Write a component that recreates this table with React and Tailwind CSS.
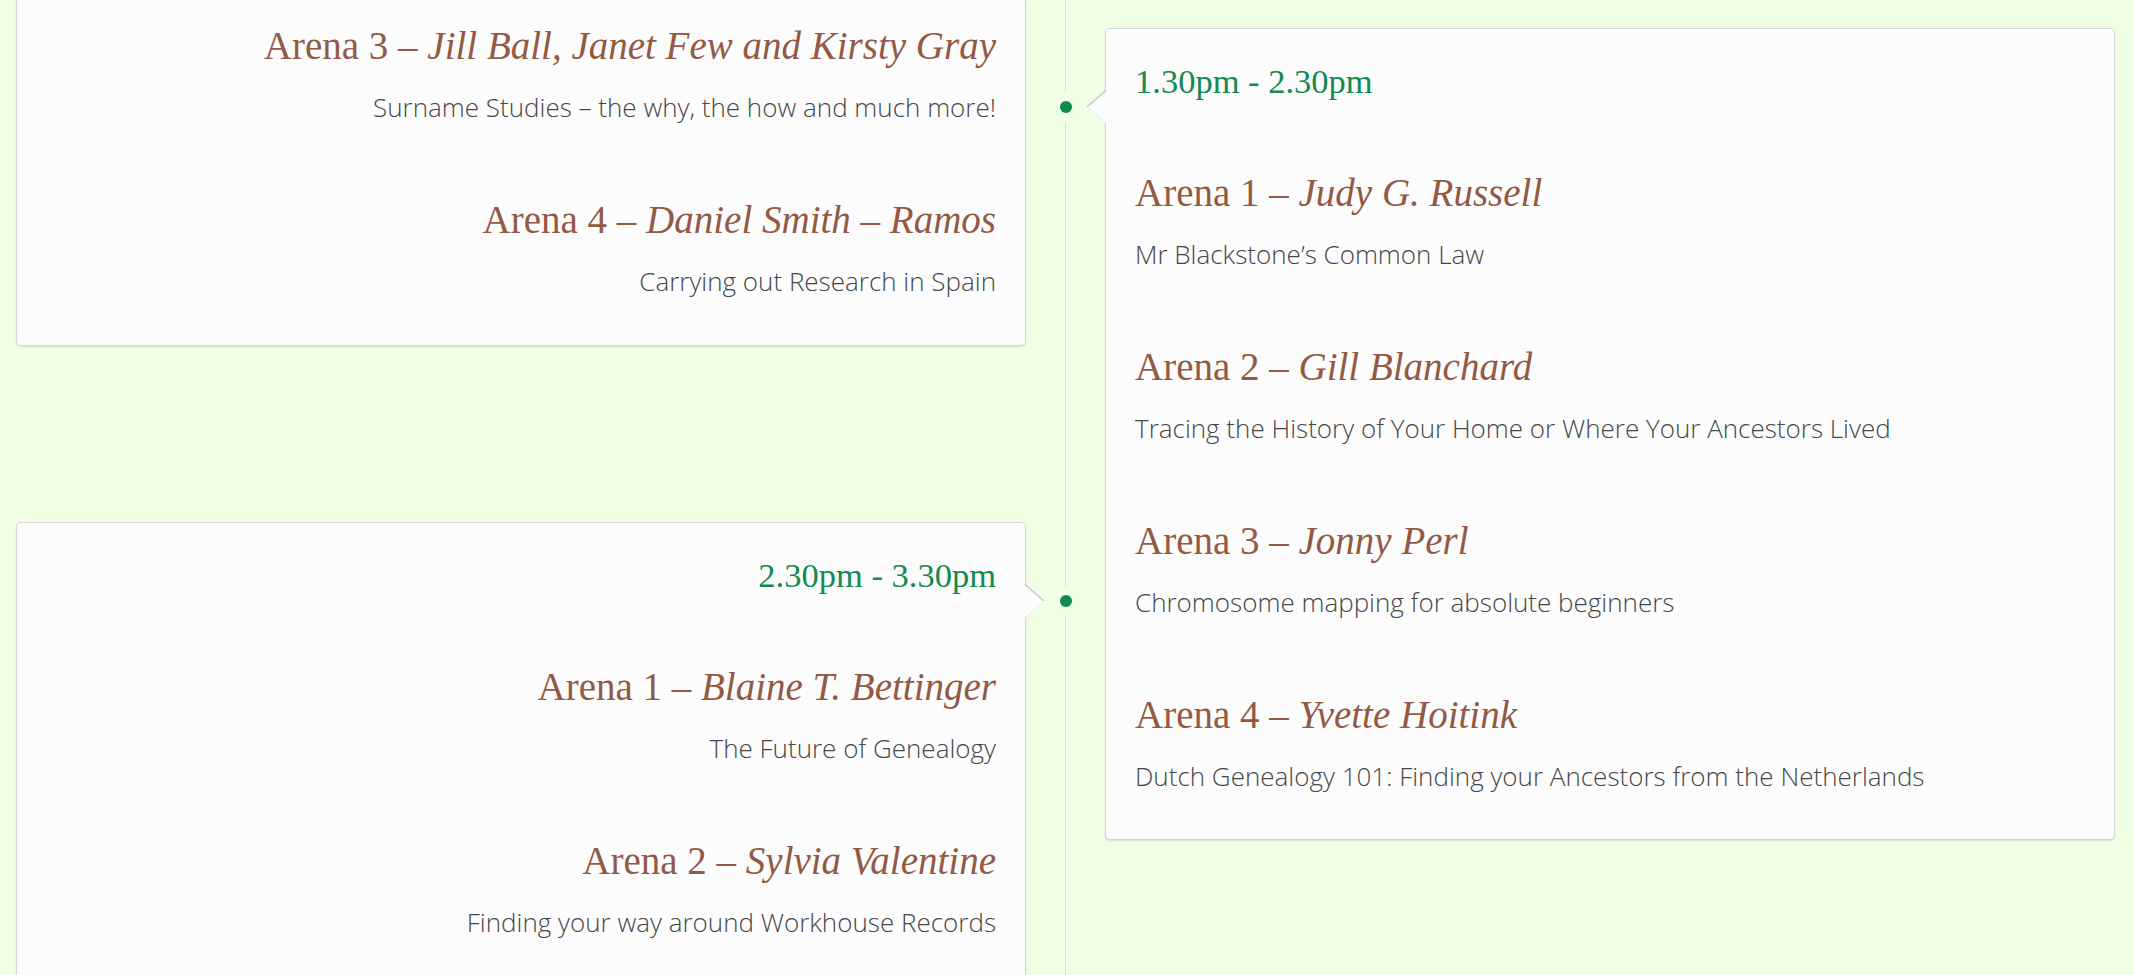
import React from 'react';

const serif = 'font-["Liberation_Serif","Times_New_Roman",serif]';

const slots = {
  leftTop: {
    sessions: [
      { arena: 'Arena 3', speaker: 'Jill Ball, Janet Few and Kirsty Gray', talk: 'Surname Studies – the why, the how and much more!' },
      { arena: 'Arena 4', speaker: 'Daniel Smith – Ramos', talk: 'Carrying out Research in Spain' },
    ],
  },
  right: {
    time: '1.30pm - 2.30pm',
    sessions: [
      { arena: 'Arena 1', speaker: 'Judy G. Russell', talk: 'Mr Blackstone’s Common Law' },
      { arena: 'Arena 2', speaker: 'Gill Blanchard', talk: 'Tracing the History of Your Home or Where Your Ancestors Lived' },
      { arena: 'Arena 3', speaker: 'Jonny Perl', talk: 'Chromosome mapping for absolute beginners' },
      { arena: 'Arena 4', speaker: 'Yvette Hoitink', talk: 'Dutch Genealogy 101: Finding your Ancestors from the Netherlands' },
    ],
  },
  leftBottom: {
    time: '2.30pm - 3.30pm',
    sessions: [
      { arena: 'Arena 1', speaker: 'Blaine T. Bettinger', talk: 'The Future of Genealogy' },
      { arena: 'Arena 2', speaker: 'Sylvia Valentine', talk: 'Finding your way around Workhouse Records' },
    ],
  },
};

// dot on the timeline + little arrow pointing from the card to it
const Marker = ({ side }) => {
  if (side === 'right') {
    return (
      <>
        <div className="absolute -left-[55px] top-[63px] w-[30px] h-[30px] rounded-full bg-[#effee4] flex items-center justify-center">
          <div className="w-[12px] h-[12px] rounded-full bg-[#0f8a4c]" />
        </div>
        <svg className="absolute -left-[20px] top-[61px]" width="21" height="34" viewBox="0 0 21 34">
          <polygon points="21,0 1,17 21,34" fill="#fcfcfc" />
          <line x1="1" y1="17" x2="20" y2="0.5" stroke="#c9c9c9" strokeWidth="1.6" />
          <line x1="1" y1="17" x2="20" y2="33.5" stroke="#ececec" strokeWidth="1" />
        </svg>
      </>
    );
  }
  return (
    <>
      <div className="absolute -right-[56px] top-[63px] w-[30px] h-[30px] rounded-full bg-[#effee4] flex items-center justify-center">
        <div className="w-[12px] h-[12px] rounded-full bg-[#0f8a4c]" />
      </div>
      <svg className="absolute -right-[20px] top-[61px]" width="21" height="34" viewBox="0 0 21 34">
        <polygon points="0,0 20,17 0,34" fill="#fcfcfc" />
        <line x1="20" y1="17" x2="1" y2="0.5" stroke="#c9c9c9" strokeWidth="1.6" />
        <line x1="20" y1="17" x2="1" y2="33.5" stroke="#ececec" strokeWidth="1" />
      </svg>
    </>
  );
};

const Session = ({ session, first }) => (
  <div className={first ? '' : 'mt-[71px]'}>
    <h3 className={`${serif} text-[39px] leading-[48px] text-[#925a44] font-normal whitespace-nowrap`}>
      {session.arena} – <em>{session.speaker}</em>
    </h3>
    <p className='mt-[19px] font-["Open_Sans",sans-serif] font-light text-[26px] leading-[36px] text-[#474747] whitespace-nowrap'>
      {session.talk}
    </p>
  </div>
);

const Card = ({ slot, side, className = '', marker = true }) => {
  const align = side === 'left' ? 'text-right' : 'text-left';
  return (
    <div
      className={`relative bg-[#fcfcfc] border border-[#d6d6d6] rounded-[5px] shadow-[0_1px_2px_rgba(0,0,0,0.12)] px-[29px] ${align} ${className}`}
    >
      {marker && <Marker side={side} />}
      {slot.time && (
        <div className={`${serif} text-[34.5px] leading-[40px] text-[#138a4e] mb-[68px]`}>{slot.time}</div>
      )}
      {slot.sessions.map((s, i) => (
        <Session key={s.arena + s.speaker} session={s} first={i === 0} />
      ))}
    </div>
  );
};

export default function App() {
  return (
    <div className="flex h-[975px] overflow-hidden bg-[#effee4] pl-[16px]">
      {/* Left column */}
      <div className="w-[1010px] shrink-0 flex flex-col">
        <Card slot={slots.leftTop} side="left" marker={false} className="border-t-0 rounded-t-none pt-[22px] pb-[46px]" />
        <Card slot={slots.leftBottom} side="left" className="mt-[176px] pt-[32px] pb-[200px]" />
      </div>

      {/* Timeline line */}
      <div className="w-[79px] shrink-0 flex justify-center">
        <div className="w-px h-full bg-[#d9e3d2]" />
      </div>

      {/* Right column */}
      <div className="w-[1010px] shrink-0 pt-[28px]">
        <Card slot={slots.right} side="right" className="pt-[32px] pb-[45px]" />
      </div>
    </div>
  );
}
